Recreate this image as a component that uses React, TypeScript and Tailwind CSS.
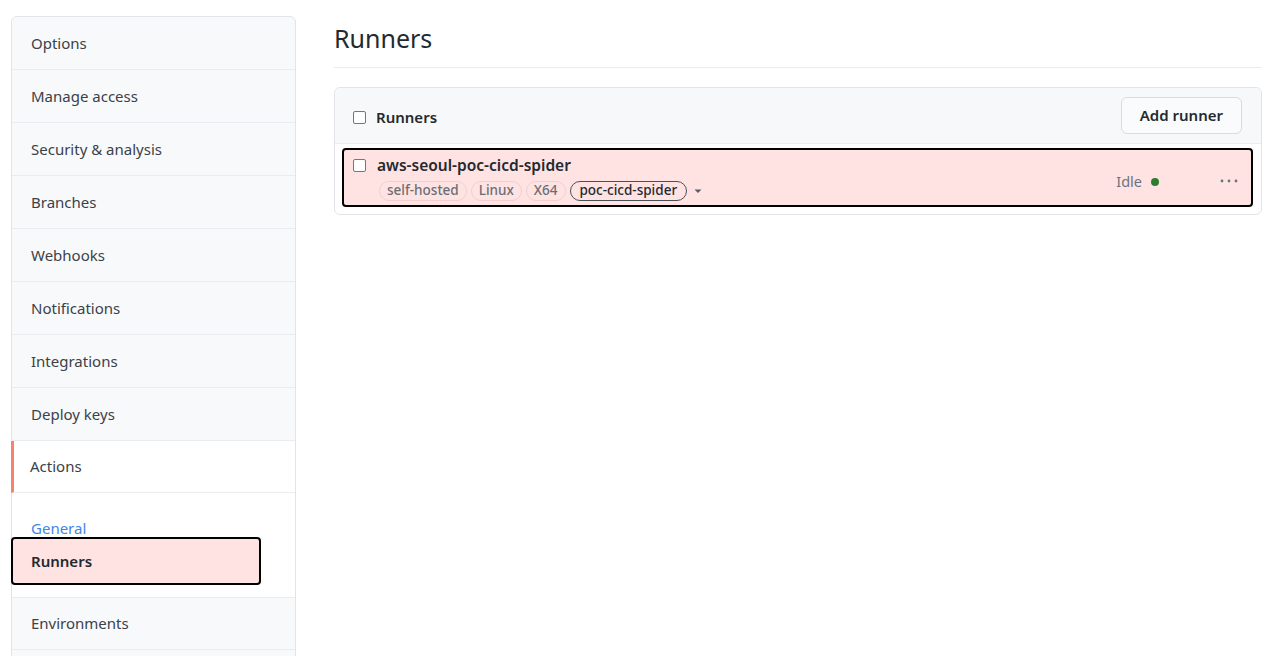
import React from "react";

const font = { fontFamily: '"Noto Sans", "Segoe UI", Arial, sans-serif' };

const navItems = [
  "Options",
  "Manage access",
  "Security & analysis",
  "Branches",
  "Webhooks",
  "Notifications",
  "Integrations",
  "Deploy keys",
];

function Checkbox() {
  return (
    <span className="inline-block w-[13px] h-[13px] rounded-[2px] border border-[#767676] bg-white shrink-0" />
  );
}

function Label({ text, strong }: { text: string; strong?: boolean }) {
  return (
    <span
      className={`inline-flex items-center h-[20px] rounded-full text-[13.5px] font-medium ${
        strong
          ? "px-[9px] border border-[#4a5058] text-[#24292f]"
          : "px-[7px] border border-[#f0cfcf] text-[#6a6f75]"
      }`}
    >
      {text}
    </span>
  );
}

export default function App() {
  return (
    <div className="min-h-screen bg-white flex pt-4 pl-[11px] pr-2 text-[#24292f]" style={font}>
      <aside className="w-[285px] shrink-0 border border-[#e1e4e8] rounded-t-md bg-[#f8f9fb] self-start">
        {navItems.map((item) => (
          <div
            key={item}
            className="h-[53px] flex items-center pl-[19px] border-b border-[#eaecef] text-[15px] text-[#3b4148]"
          >
            {item}
          </div>
        ))}
        <div className="h-[52px] flex items-center pl-[16px] border-l-[3px] border-l-[#f9826c] border-b border-[#eaecef] bg-white text-[15px] text-[#3b4148] -ml-px">
          Actions
        </div>
        <div className="bg-white pt-[24px] pb-[12px] border-b border-[#eaecef]">
          <div className="pl-[19px] text-[15px] text-[#3f86ea] leading-[22px]">General</div>
          <div className="-ml-px mt-[-2px] w-[250px] h-[48px] flex items-center pl-[18px] bg-[#ffe3e3] border-2 border-black rounded-[4px] text-[15px] font-semibold text-[#24292f]">
            Runners
          </div>
        </div>
        <div className="h-[52px] flex items-center pl-[19px] border-b border-[#eaecef] text-[15px] text-[#3b4148]">
          Environments
        </div>
        <div className="h-[40px]" />
      </aside>

      <main className="flex-1 ml-[38px]">
        <h1 className="text-[25px] leading-[34px] pt-[5px] pb-[12px] border-b border-[#eaecef] text-[#24292f]">
          Runners
        </h1>
        <div className="mt-[19px] border border-[#e1e4e8] rounded-md">
          <div className="h-[56px] flex items-center justify-between bg-[#f6f8fa] border-b border-[#eaecef] pl-[18px] pr-[19px] rounded-t-md">
            <div className="flex items-center gap-[10px] mt-[3px]">
              <Checkbox />
              <span className="text-[15px] font-semibold text-[#24292f]">Runners</span>
            </div>
            <button className="h-[37px] px-[18px] rounded-md border border-[#d8dce0] bg-[#fafbfc] text-[15px] font-semibold text-[#24292f]">
              Add runner
            </button>
          </div>
          <div className="pl-[7px] pr-[8px] pt-[4px] pb-[7px]">
            <div className="h-[59px] flex items-center bg-[#ffe3e3] border-2 border-black rounded-[4px] pl-[9px] pr-[12px]">
              <div className="flex flex-col flex-1">
                <div className="flex items-center gap-[11px] h-[22px]">
                  <Checkbox />
                  <span className="text-[15.5px] font-semibold text-[#24292f]">aws-seoul-poc-cicd-spider</span>
                </div>
                <div className="flex items-center gap-[4px] pl-[26px] mt-[4px]">
                  <Label text="self-hosted" />
                  <Label text="Linux" />
                  <Label text="X64" />
                  <Label text="poc-cicd-spider" strong />
                  <svg width="10" height="10" viewBox="0 0 10 10" className="ml-[2px]">
                    <path d="M1.5 3.5h7L5 7z" fill="#57606a" />
                  </svg>
                </div>
              </div>
              <div className="flex items-center gap-[9px] mr-[60px] mt-[8px]">
                <span className="text-[14.5px] text-[#6a737d]">Idle</span>
                <span className="w-[8px] h-[8px] rounded-full bg-[#2c7d32]" />
              </div>
              <svg width="20" height="6" viewBox="0 0 20 6" className="mt-[7px]">
                <circle cx="3" cy="3" r="1.4" fill="#6a737d" />
                <circle cx="10" cy="3" r="1.4" fill="#6a737d" />
                <circle cx="17" cy="3" r="1.4" fill="#6a737d" />
              </svg>
            </div>
          </div>
        </div>
      </main>
    </div>
  );
}
